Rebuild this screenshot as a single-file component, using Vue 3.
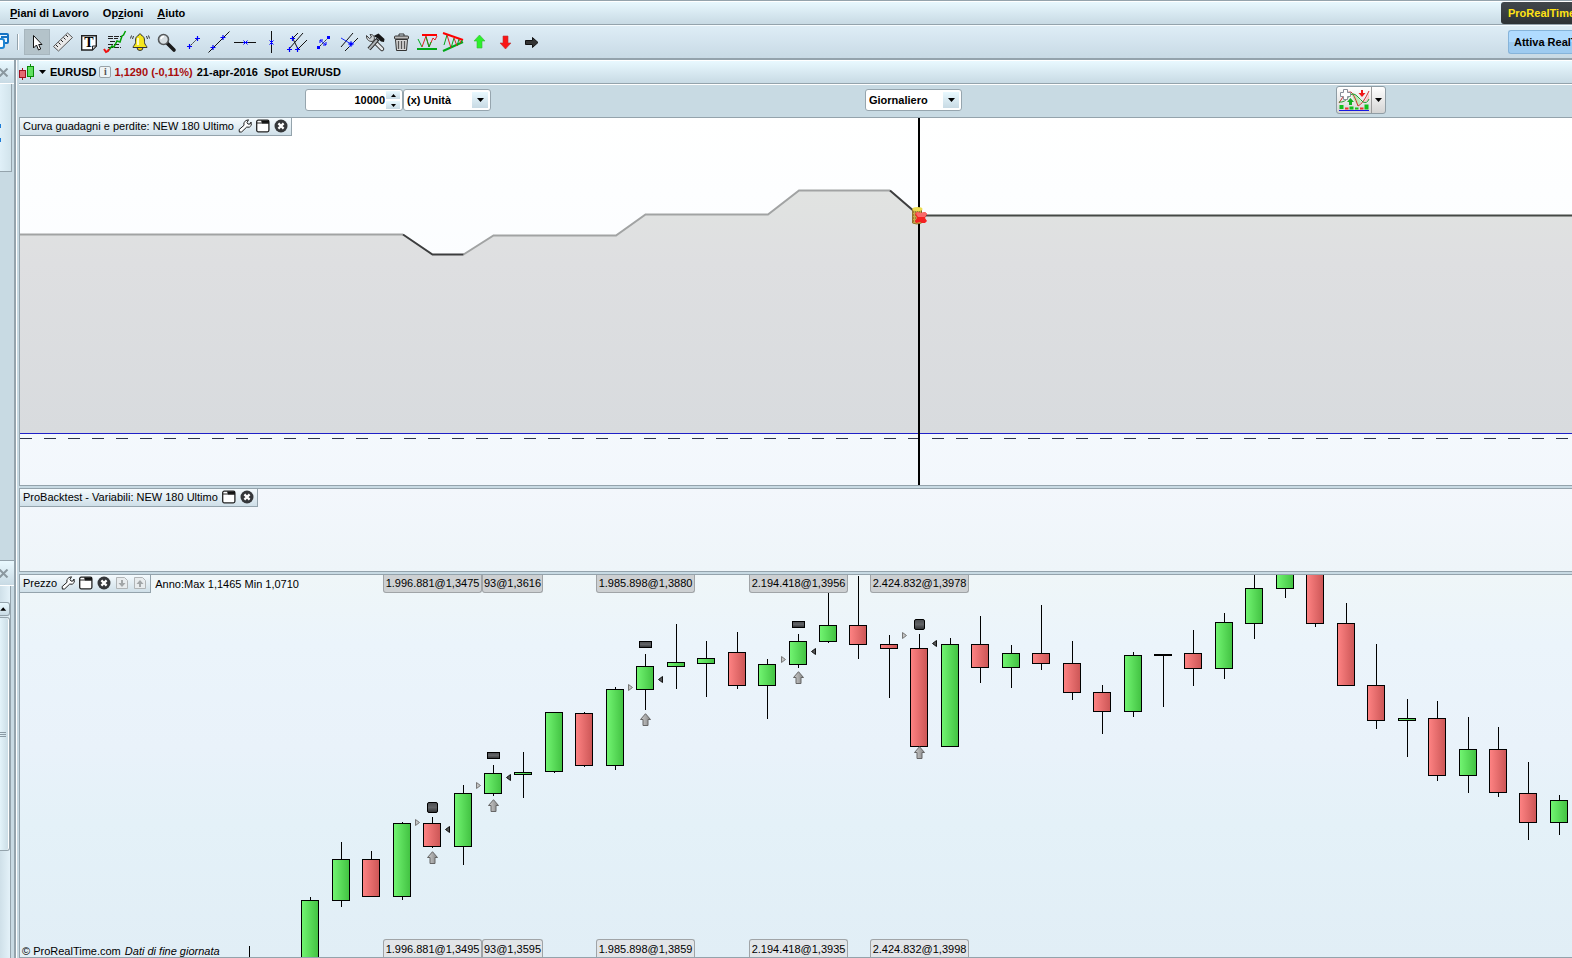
<script setup>
import { ref } from 'vue'

const quantity = ref('10000')
const unit = ref('(x) Unità')
const period = ref('Giornaliero')

const tools = [
  'cursor', 'ruler', 'text', 'fibonacci', 'alarm', 'zoom', 'segment', 'line', 'horizontal', 'vertical',
  'pitchfork', 'channel', 'parallel', 'settings', 'trash', 'range', 'triangle', 'up', 'down', 'right'
]

// x, high, body top, body bottom, low, direction
const candles = [
  [310, 897, 900, 970, 970, 'g'], [341, 842, 859, 901, 907, 'g'], [371, 851, 859, 897, 897, 'r'],
  [402, 822, 823, 897, 900, 'g'], [432, 817, 823, 847, 848, 'r'], [463, 785, 793, 847, 865, 'g'],
  [493, 765, 773, 794, 796, 'g'], [523, 752, 772, 775, 798, 'g'], [554, 712, 712, 772, 773, 'g'],
  [584, 712, 713, 766, 767, 'r'], [615, 687, 689, 766, 770, 'g'], [645, 654, 666, 690, 710, 'g'],
  [676, 624, 662, 667, 689, 'g'], [706, 641, 658, 664, 697, 'g'], [737, 632, 652, 686, 689, 'r'],
  [767, 659, 664, 686, 719, 'g'], [798, 634, 641, 665, 668, 'g'], [828, 580, 625, 642, 643, 'g'],
  [858, 576, 625, 645, 659, 'r'], [889, 635, 644, 649, 698, 'r'], [919, 634, 648, 747, 747, 'r'],
  [950, 638, 644, 747, 747, 'g'], [980, 616, 644, 668, 683, 'r'], [1011, 645, 653, 668, 688, 'g'],
  [1041, 605, 653, 664, 670, 'r'], [1072, 641, 663, 693, 700, 'r'], [1102, 685, 692, 712, 734, 'r'],
  [1133, 652, 655, 712, 717, 'g'], [1163, 654, 654, 656, 707, 'g'], [1193, 630, 653, 669, 686, 'r'],
  [1224, 613, 622, 669, 679, 'g'], [1254, 570, 588, 624, 639, 'g'], [1285, 560, 560, 589, 598, 'g'],
  [1315, 560, 560, 624, 627, 'r'], [1346, 603, 623, 686, 686, 'r'], [1376, 644, 685, 721, 729, 'r'],
  [1407, 699, 718, 721, 757, 'g'], [1437, 701, 718, 776, 781, 'r'], [1468, 717, 749, 776, 793, 'g'],
  [1498, 727, 749, 793, 797, 'r'], [1528, 762, 793, 823, 840, 'r'], [1559, 795, 800, 823, 835, 'g']
].map(([x, high, top, bottom, low, dir]) => ({ x, high, top, bottom, low, dir }))

const trades = [
  { x: 432, exit: 802, square: true, arrow: 851, into: 822, out: 829 },
  { x: 493, exit: 752, square: false, arrow: 799, into: 785, out: 777 },
  { x: 645, exit: 641, square: false, arrow: 713, into: 687, out: 679 },
  { x: 798, exit: 621, square: false, arrow: 671, into: 659, out: 651 },
  { x: 919, exit: 619, square: true, arrow: 746, into: 635, out: 643 }
]

const tags = [
  { left: 462, width: 61, top: '93@1,3616', bottom: '93@1,3595' },
  { left: 363, width: 99, top: '1.996.881@1,3475', bottom: '1.996.881@1,3495' },
  { left: 576, width: 99, top: '1.985.898@1,3880', bottom: '1.985.898@1,3859' },
  { left: 729, width: 99, top: '2.194.418@1,3956', bottom: '2.194.418@1,3935' },
  { left: 850, width: 99, top: '2.424.832@1,3978', bottom: '2.424.832@1,3998' }
]

const panelIcons = {
  profit: ['wrench', 'window', 'close'],
  variables: ['window', 'close'],
  price: ['wrench', 'window', 'close', 'import', 'export']
}
</script>

<template>
  <div class="app">
    <svg class="defs" width="0" height="0" aria-hidden="true">
      <defs>
        <linearGradient id="gGreen"><stop offset="0" stop-color="#71f471" /><stop offset="1" stop-color="#43c343" /></linearGradient>
        <linearGradient id="gRed"><stop offset="0" stop-color="#fd8282" /><stop offset="1" stop-color="#cd5757" /></linearGradient>
        <linearGradient id="gDark" x2="0" y2="1"><stop offset="0" stop-color="#4b4d50" /><stop offset=".5" stop-color="#626467" /><stop offset="1" stop-color="#2d2f31" /></linearGradient>
        <linearGradient id="gGrey"><stop offset="0" stop-color="#cfcfcf" /><stop offset="1" stop-color="#858585" /></linearGradient>
        <linearGradient id="gArea" x2="0" y2="1"><stop offset="0" stop-color="#e1e3e1" /><stop offset=".3" stop-color="#dedfe1" /><stop offset="1" stop-color="#d8dbde" /></linearGradient>

        <symbol id="p-wrench" viewBox="0 0 14 14"><path d="M8 1.5 10.5 .8 9 3.6l1 1.5 2-.1 1-2 .3 3.3-2 1.9-2.6-.1-5 4.8-2.3.2-.3-2.5L6 6.3 5.9 3.6z" fill="#fff" stroke="#222" /></symbol>
        <symbol id="p-window" viewBox="0 0 14 14"><rect x=".7" y="1.2" width="12.2" height="11.6" rx="1.5" fill="#fff" stroke="#222" stroke-width="1.3" /><path d="M5 1.500h8v3H6z" fill="#111" /><path d="M1 4h12" stroke="#222" /></symbol>
        <symbol id="p-close" viewBox="0 0 14 14"><circle cx="7" cy="7" r="6.5" fill="#35373a" /><path d="m4.400 4.400 5.200 5.200m0-5.200-5.200 5.200" stroke="#fff" stroke-width="2.200" /></symbol>
        <symbol id="p-import" viewBox="0 0 14 14"><path d="M1.500 1.500h8l3 3v8h-11z" fill="#e8ecee" stroke="#b1b5b7" /><path d="M6 4h2v3h2.500L7 11 3.500 7H6z" fill="#a2a6a8" /></symbol>
        <symbol id="p-export" viewBox="0 0 14 14"><path d="M1.500 1.500h8l3 3v8h-11z" fill="#e8ecee" stroke="#b1b5b7" /><path d="M6 11h2V8h2.500L7 4 3.500 8H6z" fill="#a2a6a8" /></symbol>

        <symbol id="t-cursor" viewBox="0 0 26 26"><path d="M9.500 6.500v12.500l3-3 2 5 2.200-1-2-4.500h3.300z" fill="#fff" stroke="#111" /></symbol>
        <symbol id="t-ruler" viewBox="0 0 26 26"><path d="M3.500 17.500 17.500 4l5 4.500L8.500 22z" fill="#e9e9e9" stroke="#555" /><path d="m6 16 2 2m.5-4.500 2 2m.5-4.500 2 2m.5-4.500 2 2m.5-4.500 2 2" stroke="#222" /></symbol>
        <symbol id="t-text" viewBox="0 0 26 26"><path d="M5.700 6.700h14.600v10.300l-4 4H5.700z" fill="#fff" stroke="#222" stroke-width="1.400" /><path d="M16.500 21v-4h4z" fill="#ddd" stroke="#222" /><text x="13" y="18" text-anchor="middle" class="serif-t">T</text></symbol>
        <symbol id="t-fibonacci" viewBox="0 0 26 26"><path d="M6 7.500h14M6 9.500h10M8 12.500h10M6 15.500h12M6 18.500h13" stroke="#222" stroke-dasharray="5 1" /><path d="m7 21 3-4 2 1 3-6 3 1 2-6 1.500-1 2-4" fill="none" stroke="#00a000" stroke-width="1.500" /><path d="m2 20 2 3 2-1 1-2" fill="none" stroke="#f01010" stroke-width="2" /></symbol>
        <symbol id="t-alarm" viewBox="0 0 26 26"><path d="M12 5c-1 0-1.500.6-1.500 1.500C7.500 7.500 7.500 10 7.500 13.500 7.500 15.500 5 17 5 18.500h14c0-1.500-2.500-3-2.500-5 0-3.500 0-6-3-7C13.500 5.600 13 5 12 5z" fill="#f5e71e" stroke="#333" /><path d="M9 18.500a3 3 0 0 0 6 0z" fill="#f4d500" stroke="#333" /><path d="M10 9v7" stroke="#fff" stroke-width="1.500" /><path d="M5.500 7 4.500 10M3.500 6.500 2.500 9.500M18.500 7l1 3m1-3.500 1 3" stroke="#333" /></symbol>
        <symbol id="t-zoom" viewBox="0 0 26 26"><path d="m13 14 7 7" stroke="#1b1b1b" stroke-width="3.600" stroke-linecap="round" /><circle cx="9.500" cy="10.500" r="5" fill="#d7dee2" stroke="#55585a" stroke-width="1.600" /><path d="M7 10q.5-2.500 3-2.500" fill="none" stroke="#fff" stroke-width="1.500" /></symbol>
        <symbol id="t-segment" viewBox="0 0 26 26"><path d="m9 18 9-9" stroke="#222" stroke-dasharray="2 1" /><path d="M7 17.500h5M9.500 15v5M15 9.500h5M17.500 7v5" stroke="#00f" stroke-width="1.200" /></symbol>
        <symbol id="t-line" viewBox="0 0 26 26"><path d="M2.500 23.500l21-21" stroke="#111" /><path d="M4.500 18.500h5M7 16v5M14.500 8.500h5M17 6v5" stroke="#00f" stroke-width="1.200" /></symbol>
        <symbol id="t-horizontal" viewBox="0 0 26 26"><path d="M2 13.500h22" stroke="#111" /><path d="m11.500 11.500 4 4m0-4-4 4M11 13.500h5" stroke="#00f" /></symbol>
        <symbol id="t-vertical" viewBox="0 0 26 26"><path d="M13.500 2v22" stroke="#111" /><path d="m11.500 11.500 4 4m0-4-4 4M13.500 11v5" stroke="#00f" /></symbol>
        <symbol id="t-pitchfork" viewBox="0 0 26 26"><path d="M9 9 14 4M5 20 19 4M14 20l9-9M9 10l5 10" stroke="#111" /><path d="M3 20.500h5M5.500 18v5M11 20.500h5M13.500 18v5M6 9.500h5M8.500 7v5" stroke="#00f" stroke-width="1.200" /></symbol>
        <symbol id="t-channel" viewBox="0 0 26 26"><path d="m8 19 11-11" stroke="#111" stroke-dasharray="2 1" /><path d="M7 17h3v3H7zM17 7h3v3h-3z" fill="#00f" /><path d="m10 11 6 5m-6-5v3m0-3h3m3 5v-3m0 3h-3" stroke="#00f" fill="none" /></symbol>
        <symbol id="t-parallel" viewBox="0 0 26 26"><path d="M5 18 17 4" stroke="#111" /><path d="m9 22 13-13" stroke="#1a2cff" /><path d="m18 13 4-4M9 22l4-4" stroke="#111" /><path d="m5 9 10 6M15 12v6m-3-3h6" stroke="#1a2cff" /><path d="M13.500 13.500h3v3h-3z" fill="#00f" /></symbol>
        <symbol id="t-settings" viewBox="0 0 26 26"><path d="m20 20-9-9" stroke="#333" stroke-width="4.500" stroke-linecap="round" /><path d="m20 20-9-9" stroke="#e4e7e9" stroke-width="2.500" stroke-linecap="round" /><path d="M4.500 6.500 7.500 9.500 9.500 8 8 5.500C12 5 13.500 9 11.500 12 8 13.500 4 11 4.500 6.500z" fill="#ccd1d4" stroke="#444" /><path d="m7 20 9-10" stroke="#222" stroke-width="4" /><path d="m7 20 8-9" stroke="#aeb3b6" stroke-width="2" /><path d="m11.500 7 5-2.500 6 5.500-.5 3-3-.5-3-3z" fill="#161616" /></symbol>
        <symbol id="t-trash" viewBox="0 0 26 26"><path d="M7.500 10.500h12l-1 11h-10z" fill="#d8d8d8" stroke="#333" /><path d="M10.500 12v8m3-8v8m3-8v8" stroke="#555" stroke-width="1.300" /><rect x="6.500" y="7" width="14" height="3" rx="1" fill="#bbb" stroke="#333" /><path d="M11 7V5h5v2" fill="none" stroke="#333" /></symbol>
        <symbol id="t-range" viewBox="0 0 26 26"><path d="M8 6h15" stroke="#f00" stroke-width="2" /><path d="M3 20h20" stroke="#00a818" stroke-width="2" /><path d="m4 10 4 8" stroke="#00a818" fill="none" /><path d="m8 18 4-11 3 11 4-9 2 2 2-4" fill="none" stroke="#e02020" /><path d="m12 8 3 10 2-5" fill="none" stroke="#00a818" /></symbol>
        <symbol id="t-triangle" viewBox="0 0 26 26"><path d="m3 4 20 7" stroke="#f00" stroke-width="2" /><path d="m3 22 20-9" stroke="#00a818" stroke-width="2" /><path d="M4 16 7 6m4 13 3-10m3 8 2-7m2 4 1-3" fill="none" stroke="#00a818" /><path d="m7 6 4 13m3-10 3 8m2-7 2 4" stroke="#e02020" /></symbol>
        <symbol id="t-up" viewBox="0 0 26 26"><path d="m13.500 6 5.500 6h-3v7h-5v-7H8z" fill="#2df02d" stroke="#35b835" stroke-width=".6" /></symbol>
        <symbol id="t-down" viewBox="0 0 26 26"><path d="m13.500 20-5.500-6h3V7h5v7h3z" fill="#fa1515" stroke="#b83535" stroke-width=".6" /></symbol>
        <symbol id="t-right" viewBox="0 0 26 26"><path d="m20 13.500-5.500-5v3h-7v4h7v3z" fill="#333" stroke="#111" /></symbol>
      </defs>
    </svg>

    <header class="menubar">
      <nav class="menu">
        <button><u>P</u>iani di Lavoro</button>
        <button>Op<u>z</u>ioni</button>
        <button><u>A</u>iuto</button>
      </nav>
      <button class="brand">ProRealTime</button>
    </header>

    <div class="toolbar">
      <svg class="windows" viewBox="0 0 9 20" aria-hidden="true">
        <path d="M-3 2h10q1 0 1 1v7q0 1-1 1h-4" fill="#eaf6ff" stroke="#1673c4" stroke-width="2" />
        <path d="M-2 7h4q2 0 2 2v5q0 2-2 2h-4" fill="#fff" stroke="#1f86d4" stroke-width="2" /><path d="M1 5h6" stroke="#1673c4" stroke-width="2" />
      </svg>
      <span class="separator"></span>
      <button v-for="tool in tools" :key="tool" class="tool" :class="{ active: tool === 'cursor' }" :aria-label="tool">
        <svg viewBox="0 0 26 26"><use :href="'#t-' + tool" /></svg>
      </button>
      <button class="activate">Attiva RealTime</button>
    </div>

    <div class="workspace">
      <aside class="side">
        <div class="side-head first"><button aria-label="Chiudi lista"><svg viewBox="0 0 9 9"><path d="m-.5.5 8 8m0-8-8 8" stroke="#8b989f" stroke-width="2" /></svg></button></div>
        <div class="side-list"><i></i><i></i></div>
        <div class="side-fill"></div>
        <div class="side-head"><button aria-label="Chiudi pannello"><svg viewBox="0 0 9 9"><path d="m-.5.5 8 8m0-8-8 8" stroke="#8b989f" stroke-width="2" /></svg></button></div>
        <div class="scroll">
          <button class="scroll-up" aria-label="Scorri su"><svg viewBox="0 0 10 14"><path d="M0 9h7L3.500 5z" /></svg></button>
          <div class="thumb"><i></i><i></i><i></i></div>
        </div>
      </aside>

      <main class="main">
        <div class="symbolbar">
          <svg class="symbol-icon" viewBox="0 0 16 18" aria-hidden="true">
            <path d="M3.500 5v12" stroke="#a01020" /><rect x=".5" y="7.500" width="6" height="7" fill="#e56a72" stroke="#a01020" />
            <path d="M11.500 1v15" stroke="#0a8a0a" /><rect x="8.500" y="3.500" width="6" height="10" fill="#60e060" stroke="#0a8a0a" />
          </svg>
          <svg class="caret" viewBox="0 0 7 4" aria-hidden="true"><path d="M0 0h7L3.500 4z" /></svg>
          <b class="symbol">EURUSD</b>
          <span class="info">i</span>
          <b class="quote">1,1290 (-0,11%)</b>
          <b class="date">21-apr-2016</b>
          <b>Spot EUR/USD</b>
        </div>

        <div class="controls">
          <div class="amount">
            <label class="number">
              <input v-model="quantity" type="text" aria-label="Quantità" />
              <span class="spin">
                <button aria-label="Aumenta"><svg viewBox="0 0 5 3"><path d="M0 3h5L2.500 0z" /></svg></button>
                <button aria-label="Diminuisci"><svg viewBox="0 0 5 3"><path d="M0 0h5L2.500 3z" /></svg></button>
              </span>
            </label>
            <label class="choice unit">
              <select v-model="unit" aria-label="Unità"><option>(x) Unità</option></select>
              <span class="drop"><svg viewBox="0 0 7 4"><path d="M0 0h7L3.500 4z" /></svg></span>
            </label>
          </div>
          <label class="choice period">
            <select v-model="period" aria-label="Periodo"><option>Giornaliero</option></select>
            <span class="drop"><svg viewBox="0 0 7 4"><path d="M0 0h7L3.500 4z" /></svg></span>
          </label>
          <div class="indicators">
            <button class="indicator-main" aria-label="Indicatori">
              <svg viewBox="0 0 34 26">
                <path d="M14 6q5 0 10 9l-3 4q-5-6-7-13z" fill="#bce8b4" />
                <path d="M24 15q5 1 8-9v6q-3 4-8 3z" fill="#f6c4c4" />
                <path d="M2 16Q9 4 14 5q3 2 7 14 5-2 11-15" fill="none" stroke="#d03030" />
                <path d="M2 15q6 1 10-6 4-4 8 0t6 6q4 2 6-3" fill="none" stroke="#20a030" />
                <path d="M26 3v3h2.500L25 10l-3.500-4H24V3z" fill="#f01818" />
                <path d="m13.500 11 3.500 4h-2v3h-3v-3h-2z" fill="#10b020" />
                <path d="M6.500 2.500h4v3h3v4h-3v3h-4v-3h-3v-4h3z" fill="#fff" stroke="#8a8f9a" />
                <path d="M2.500 18h4v4h-4zm10 1.500h4v3h-4zm15-2h4v5h-4z" fill="#0fc01c" />
                <path d="M8 20.500h3.500v2H8zm15 0h3.500v2H23z" fill="#f03030" /><path d="M18 20.500h3.500v2H18z" fill="#0fc01c" />
                <path d="M2 23.500h30" stroke="#1818e0" />
              </svg>
            </button>
            <button class="indicator-drop" aria-label="Scegli indicatore"><svg viewBox="0 0 7 4"><path d="M0 0h7L3.500 4z" /></svg></button>
          </div>
        </div>

        <div class="charts">
          <section class="chart profit">
            <svg class="plot" viewBox="20 118 1552 367" preserveAspectRatio="xMinYMin slice">
              <path d="M20 234.500H403L432.500 254.500H463.500L493.500 235.500H616L645.500 214.500H768L799 190.500H890L919 215.500H1572V433H20z" fill="url(#gArea)" />
              <path d="M20 234.500H403M463.500 254.500 493.500 235.500H616L645.500 214.500H768L799 190.500H890" fill="none" stroke="#a1a3a3" stroke-width="2" />
              <path d="M403 234.500 432.500 254.500H463.500M890 190.500 919 215.500" fill="none" stroke="#3c3d3e" stroke-width="2" />
              <path d="M919 215.500H1572" stroke="#454845" stroke-width="2" />
              <path d="M20 433.500H1572" stroke="#2020c8" />
              <path d="M20 438.500H1572" stroke="#2c3048" stroke-dasharray="12 12" />
              <path d="M919 118v367" stroke="#000" stroke-width="2" />
              <path d="M912.500 209v14q4 2 9 0v-14z" fill="#c9a94a" stroke="#94732a" />
              <path d="M913 212h9m-9 3h9m-9 3h9m-9 3h9" stroke="#6e5720" stroke-dasharray="1 1" />
              <ellipse cx="917.500" cy="209" rx="5" ry="2" fill="#ecdc50" />
              <path d="m917 212 4 1 4-1 2 2-2 4 2 3-2 2h-3l-2-1-4 1-1-2 2-3-2-4z" fill="#f42222" /><path d="m917 212 4 1 4-1 2 2-2 3h-7l-2-3z" fill="#f96a6a" />
            </svg>
            <div class="panel-title">
              <span>Curva guadagni e perdite: NEW 180 Ultimo</span>
              <button v-for="icon in panelIcons.profit" :key="icon" :aria-label="icon"><svg><use :href="'#p-' + icon" /></svg></button>
            </div>
          </section>

          <section class="chart variables">
            <div class="panel-title">
              <span>ProBacktest - Variabili: NEW 180 Ultimo</span>
              <button v-for="icon in panelIcons.variables" :key="icon" :aria-label="icon"><svg><use :href="'#p-' + icon" /></svg></button>
            </div>
          </section>

          <section class="chart price">
            <svg class="plot" viewBox="20 575 1552 382" preserveAspectRatio="xMinYMin slice">
              <path d="M249.500 946v20" stroke="#000" />
              <g v-for="c in candles" :key="c.x">
                <rect :x="c.x" :y="c.high" width="1" :height="c.low - c.high" />
                <rect :x="c.x - 9" :y="c.top" width="18" :height="c.bottom - c.top" />
                <rect v-if="c.bottom - c.top > 2" :x="c.x - 8" :y="c.top + 1" width="16" :height="c.bottom - c.top - 2" :fill="c.dir === 'g' ? 'url(#gGreen)' : 'url(#gRed)'" />
              </g>
              <g v-for="t in trades" :key="t.x">
                <rect v-if="t.square" :x="t.x - 4.5" :y="t.exit + 0.5" width="10" height="10" rx="1.500" fill="url(#gDark)" stroke="#000" />
                <rect v-else :x="t.x - 5.5" :y="t.exit + 0.5" width="12" height="6" fill="url(#gDark)" stroke="#000" />
                <path :transform="`translate(${t.x + 0.5} ${t.arrow})`" d="M0 .7 5 6.500H2.500v6h-5v-6H-5z" fill="url(#gGrey)" stroke="#666" />
                <path :transform="`translate(${t.x - 17} ${t.into + 0.5})`" d="M.5-3 4.500 0 .5 3z" fill="#c4c4c4" stroke="#777" />
                <path :transform="`translate(${t.x + 13} ${t.out + 0.5})`" d="M4.500-3 .5 0l4 3z" fill="#555" stroke="#111" />
              </g>
            </svg>
            <div v-for="tag in tags" :key="tag.left">
              <span class="tag top" :style="{ left: tag.left + 'px', width: tag.width + 'px' }">{{ tag.top }}</span>
              <span class="tag bottom" :style="{ left: tag.left + 'px', width: tag.width + 'px' }">{{ tag.bottom }}</span>
            </div>
            <div class="title-row">
              <div class="panel-title">
                <span>Prezzo</span>
                <button v-for="icon in panelIcons.price" :key="icon" :aria-label="icon"><svg><use :href="'#p-' + icon" /></svg></button>
              </div>
              <span class="range">Anno:Max 1,1465 Min 1,0710</span>
            </div>
            <p class="copyright">© ProRealTime.com <em>Dati di fine giornata</em></p>
          </section>
        </div>
      </main>
    </div>
  </div>
</template>

<style>
body {
  margin: 0;
}
</style>

<style scoped>
.app {
  --line: #94a3ac;
  --base: #c8dae3;
  --bar: linear-gradient(#e9f9ff, #c8dae4);
  display: flex;
  flex-direction: column;
  height: 100vh;
  min-height: 600px;
  overflow: hidden;
  background: var(--base);
  color: #000;
  font: 11px/14px "Liberation Sans", Arial, sans-serif;
}
.app *,
.app *::before {
  box-sizing: border-box;
}
button,
input,
select {
  margin: 0;
  padding: 0;
  border: 0;
  background: none;
  color: inherit;
  font: bold 11px/14px "Liberation Sans", Arial, sans-serif;
}
svg {
  display: block;
}
.defs {
  position: absolute;
}
.serif-t {
  font: bold 14px "Liberation Serif", serif;
}
.menubar {
  display: flex;
  flex: none;
  justify-content: space-between;
  height: 25px;
  border-top: 1px solid var(--line);
  border-bottom: 1px solid var(--line);
  background: var(--bar);
  box-shadow: inset 0 1px #fff;
}
.menu {
  display: flex;
  gap: 14px;
  padding-left: 10px;
}
.brand,
.activate {
  overflow: hidden;
  padding-left: 7px;
  text-align: left;
  white-space: nowrap;
}
.brand {
  width: 71px;
  height: 22px;
  margin-top: 1px;
  border-radius: 3px 0 0 3px;
  background: linear-gradient(#42474b, #2d3235);
  color: #ffe314;
}
.toolbar {
  display: flex;
  flex: none;
  align-items: center;
  height: 35px;
  border-top: 1px solid #f6fcff;
  border-bottom: 2px solid var(--line);
  background: linear-gradient(#deedf6, #c8dae5);
}
.windows {
  width: 9px;
  height: 20px;
}
.separator {
  width: 2px;
  height: 16px;
  margin: 0 5px 0 8px;
  border-left: 1px solid var(--line);
  border-right: 1px solid #fff;
}
.tool {
  flex: none;
  width: 26px;
  height: 26px;
}
.tool.active {
  background: #b4c3ca;
  box-shadow: inset 0 0 0 1px #a7b6be;
}
.tool svg {
  width: 26px;
  height: 26px;
}
.activate {
  width: 64px;
  height: 24px;
  margin-left: auto;
  padding-left: 5px;
  border: 1px solid #86b4da;
  border-right: 0;
  border-radius: 3px 0 0 3px;
  background: linear-gradient(#b0dbff 0 50%, #9ecbf0 50%);
}
.workspace {
  display: flex;
  flex: 1;
  min-height: 0;
}
.side {
  display: flex;
  flex: none;
  flex-direction: column;
  width: 16px;
  border-right: 2px solid var(--line);
}
.side-head {
  display: flex;
  flex: none;
  align-items: center;
  height: 26px;
  border-top: 1px solid var(--line);
  border-bottom: 1px solid #fff;
  background: var(--bar);
}
.side-head.first {
  height: 24px;
  border-top-color: #fff;
}
.side-head svg {
  width: 9px;
  height: 9px;
}
.side-list {
  display: flex;
  flex: none;
  flex-direction: column;
  gap: 10px;
  width: 12px;
  height: 88px;
  padding-top: 40px;
  border-right: 1px solid var(--line);
  border-bottom: 1px solid var(--line);
  background: linear-gradient(90deg, #e0f0f8, #d2e4ec);
}
.side-list i {
  width: 1px;
  height: 4px;
  background: #1b7cd8;
}
.side-fill {
  flex: 388 1 0;
}
.scroll {
  display: flex;
  flex: 372 1 0;
  flex-direction: column;
  width: 11px;
  border-right: 1px solid var(--line);
  background: linear-gradient(90deg, #cfe0e9, #e4f2f9);
}
.scroll-up {
  flex: none;
  width: 10px;
  height: 14px;
  margin-top: 16px;
  border: 1px solid var(--line);
  border-left: 0;
  border-radius: 0 3px 3px 0;
  background: var(--bar);
}
.scroll-up svg {
  width: 9px;
  height: 12px;
}
.thumb {
  display: flex;
  flex: 0 0 63%;
  flex-direction: column;
  gap: 1px;
  justify-content: center;
  margin-top: 1px;
  border: 1px solid var(--line);
  border-left: 0;
  border-radius: 0 3px 3px 0;
  background: linear-gradient(90deg, #e3f3fa, #c8dae3);
  box-shadow: inset -1px 0 #fff;
}
.thumb i {
  width: 6px;
  height: 1px;
  background: #8a9aa4;
}
.main {
  display: flex;
  flex: 1;
  flex-direction: column;
  min-width: 0;
  padding-left: 2px;
  border-left: 1px solid #fff;
}
.symbolbar {
  display: flex;
  flex: none;
  align-items: center;
  height: 24px;
  border-top: 1px solid #fff;
  border-bottom: 1px solid var(--line);
  background: var(--bar);
  white-space: nowrap;
}
.symbol-icon {
  width: 16px;
  height: 18px;
}
.caret,
.drop svg,
.indicator-drop svg {
  width: 7px;
  height: 4px;
}
.caret {
  margin: 0 4px;
}
.info {
  width: 12px;
  height: 12px;
  margin: 0 3px;
  border: 1px solid #99a3a8;
  border-radius: 2px;
  background: #eef4f6;
  color: #555;
  font: bold 10px/10px "Liberation Serif", serif;
  text-align: center;
}
.quote {
  margin-right: 4px;
  color: #a80d0d;
}
.date {
  margin-right: 6px;
}
.controls {
  display: flex;
  flex: none;
  align-items: center;
  justify-content: space-between;
  height: 33px;
  padding: 0 186px 2px 286px;
  border-top: 1px solid #fff;
}
.amount {
  display: flex;
}
.number,
.choice {
  position: relative;
  display: flex;
  align-items: center;
  height: 22px;
  border: 1px solid #96a5ae;
  border-radius: 3px;
  background: #fff;
}
.number {
  width: 98px;
}
.number input {
  flex: 1;
  min-width: 0;
  text-align: right;
}
.spin {
  display: grid;
  gap: 2px;
  margin: 0 2px 0 1px;
}
.spin button {
  display: grid;
  place-items: center;
  width: 14px;
  height: 8px;
  background: var(--bar);
}
.spin svg {
  width: 5px;
  height: 3px;
}
.unit {
  width: 88px;
}
.period {
  width: 97px;
}
.choice select {
  width: 100%;
  height: 20px;
  padding-left: 3px;
  appearance: none;
}
.drop {
  position: absolute;
  top: 2px;
  right: 2px;
  display: grid;
  place-items: center;
  width: 16px;
  height: 16px;
  background: var(--bar);
  pointer-events: none;
}
.indicators {
  display: flex;
  width: 50px;
  height: 28px;
  border: 1px solid #8f9da5;
  border-radius: 3px;
  background: linear-gradient(#fff, #d4d4d4);
}
.indicator-main svg {
  width: 34px;
  height: 26px;
}
.indicator-drop {
  display: grid;
  flex: 1;
  place-items: center;
  border-left: 1px solid #9a9a9a;
}
.charts {
  display: grid;
  flex: 1;
  grid-template-rows: 369fr 84fr 384fr;
  gap: 2px;
  min-height: 0;
}
.chart {
  position: relative;
  min-height: 0;
  overflow: hidden;
  border: 1px solid var(--line);
  border-right: 0;
}
.profit {
  background: linear-gradient(#fff, #fbfdff 40%, #f2f7fc);
}
.variables {
  background: linear-gradient(#f3f7fc, #eef5f9);
}
.price {
  background: linear-gradient(#eff6f8, #ebf4fb 18%, #e9f2fa 45%, #e4f1f8 65%, #e1eef6);
}
.plot {
  position: absolute;
  inset: 0;
  width: 100%;
  height: 100%;
}
.title-row {
  display: flex;
  align-items: center;
  gap: 4px;
}
.panel-title {
  position: relative;
  display: flex;
  gap: 4px;
  align-items: center;
  width: max-content;
  height: 18px;
  padding: 0 3px 1px;
  border-right: 1px solid var(--line);
  border-bottom: 1px solid var(--line);
  background: linear-gradient(#f5fbfe, #cfdfe8);
  white-space: nowrap;
}
.panel-title svg {
  width: 14px;
  height: 14px;
}
.tag {
  position: absolute;
  height: 18px;
  border: 1px solid #a0a4a7;
  line-height: 16px;
  text-align: center;
  white-space: nowrap;
}
.tag.top {
  top: 0;
  border-top: 0;
  border-radius: 0 0 3px 3px;
  background: #cdd0d2;
}
.tag.bottom {
  bottom: 0;
  border-bottom: 0;
  border-radius: 3px 3px 0 0;
  background: #e2e5e8;
  line-height: 18px;
}
.copyright {
  position: absolute;
  bottom: -1px;
  left: 2px;
  margin: 0;
  white-space: nowrap;
}
.copyright em {
  margin-left: 1px;
}
.range {
  position: relative;
}
</style>
